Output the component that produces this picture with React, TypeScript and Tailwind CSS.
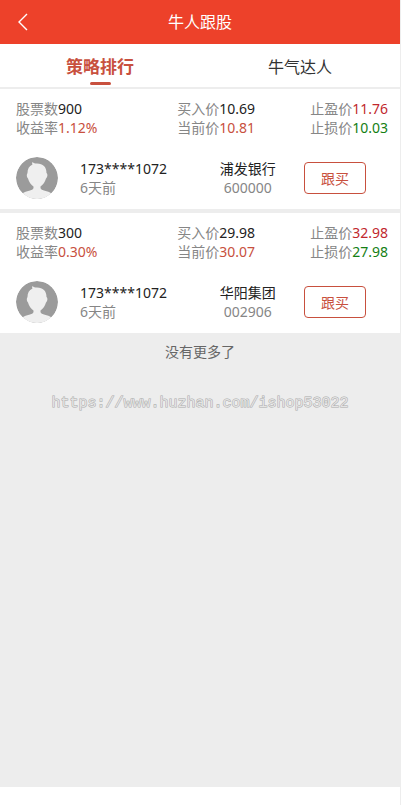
import React from "react";

type Stock = {
  count: string;
  rate: string;
  buy: string;
  current: string;
  profit: string;
  loss: string;
  user: string;
  time: string;
  name: string;
  code: string;
};

const stocks: Stock[] = [
  { count: "900", rate: "1.12%", buy: "10.69", current: "10.81", profit: "11.76", loss: "10.03", user: "173****1072", time: "6天前", name: "浦发银行", code: "600000" },
  { count: "300", rate: "0.30%", buy: "29.98", current: "30.07", profit: "32.98", loss: "27.98", user: "173****1072", time: "6天前", name: "华阳集团", code: "002906" },
];

function Avatar() {
  return (
    <svg viewBox="0 0 42 42" className="size-[42px] shrink-0 rounded-full" aria-hidden="true">
      <circle cx="21" cy="21" r="21" fill="#9b9b9b" />
      <path
        d="M16.5 5 C17.5 6.5 19 6.5 21 6.5 C27 6.5 30.5 10 30.5 16 C32 17 31.5 20.5 30 21.5 C29 25 27 28 24.5 29.5 L24.5 31 C25 34.5 32 33 35.5 36.5 C32 41 26 42 21 42 C16 42 10 41 6.5 36.5 C10 33 17 34.5 17.5 31 L17.5 29.5 C15 28 13 25 12 21.5 C10.5 20.5 10.5 17 11.5 16 C11.5 12 13 9 16.5 7.5 C16 7 16 6 16.5 5 Z"
        fill="#efefef"
      />
    </svg>
  );
}

function Figure({ label, value, tone }: { label: string; value: string; tone: string }) {
  return (
    <p className="whitespace-nowrap">
      {label}
      <span className={tone}>{value}</span>
    </p>
  );
}

function StockCard({ stock }: { stock: Stock }) {
  return (
    <article className="bg-white py-[10px] pr-3 pl-4 text-sm leading-[19px] text-[#868686]">
      <div className="flex justify-between">
        <div className="w-[106px]">
          <Figure label="股票数" value={stock.count} tone="text-[#222]" />
          <Figure label="收益率" value={stock.rate} tone="text-[#c8503e]" />
        </div>
        <div>
          <Figure label="买入价" value={stock.buy} tone="text-[#222]" />
          <Figure label="当前价" value={stock.current} tone="text-[#c8503e]" />
        </div>
        <div>
          <Figure label="止盈价" value={stock.profit} tone="text-[#c1272d]" />
          <Figure label="止损价" value={stock.loss} tone="text-[#148014]" />
        </div>
      </div>
      <div className="mt-5 flex items-center">
        <Avatar />
        <div className="ml-[22px] w-[30%]">
          <p className="text-[#222]">{stock.user}</p>
          <p>{stock.time}</p>
        </div>
        <div className="flex-1 text-center">
          <p className="text-[#222]">{stock.name}</p>
          <p>{stock.code}</p>
        </div>
        <button type="button" className="mr-[22px] h-8 w-[62px] rounded-[4px] border border-[#c8503e] text-[#c8503e]">
          跟买
        </button>
      </div>
    </article>
  );
}

export default function App() {
  return (
    <div className="min-h-screen bg-white pr-[2px] font-['Noto_Sans','Noto_Sans_CJK_SC',sans-serif]">
      <div className="min-h-screen border-r border-[#ededed]">
        <header className="relative flex h-11 items-center justify-center bg-[#ed412a] text-white">
          <button type="button" aria-label="返回" className="absolute left-4 flex size-4 items-center justify-center">
            <svg viewBox="0 0 16 18" className="h-[18px] w-4 shrink-0" fill="none" stroke="currentColor" strokeWidth="1.4">
              <path d="M11 1 L3 9 L11 17" />
            </svg>
          </button>
          <h1 className="text-base">牛人跟股</h1>
        </header>
        <nav className="flex h-[45px] border-b-2 border-[#ededed] text-base">
          <button type="button" className="flex flex-1 flex-col items-center pt-[11px] text-[17px] leading-6 font-bold text-[#c8503e]">
            策略排行
            <span className="mt-[3px] h-[3px] w-[21px] shrink-0 rounded-full bg-[#c8503e]" />
          </button>
          <button type="button" className="flex flex-1 justify-center pt-[11px] leading-6 text-[#333]">
            牛气达人
          </button>
        </nav>
        <main className="min-h-[698px] bg-[#ededed]">
          <div className="flex flex-col gap-1">
            {stocks.map((stock) => (
              <StockCard key={stock.code} stock={stock} />
            ))}
          </div>
          <p className="pt-[9px] text-center text-sm leading-5 text-[#666]">没有更多了</p>
          <p className="mt-8 text-center font-['Liberation_Mono',monospace] text-[15px] leading-5 text-[#e4e4e4] [-webkit-text-stroke:1px_#aaa] [paint-order:stroke_fill]">
            https://www.huzhan.com/ishop53022
          </p>
        </main>
      </div>
    </div>
  );
}
